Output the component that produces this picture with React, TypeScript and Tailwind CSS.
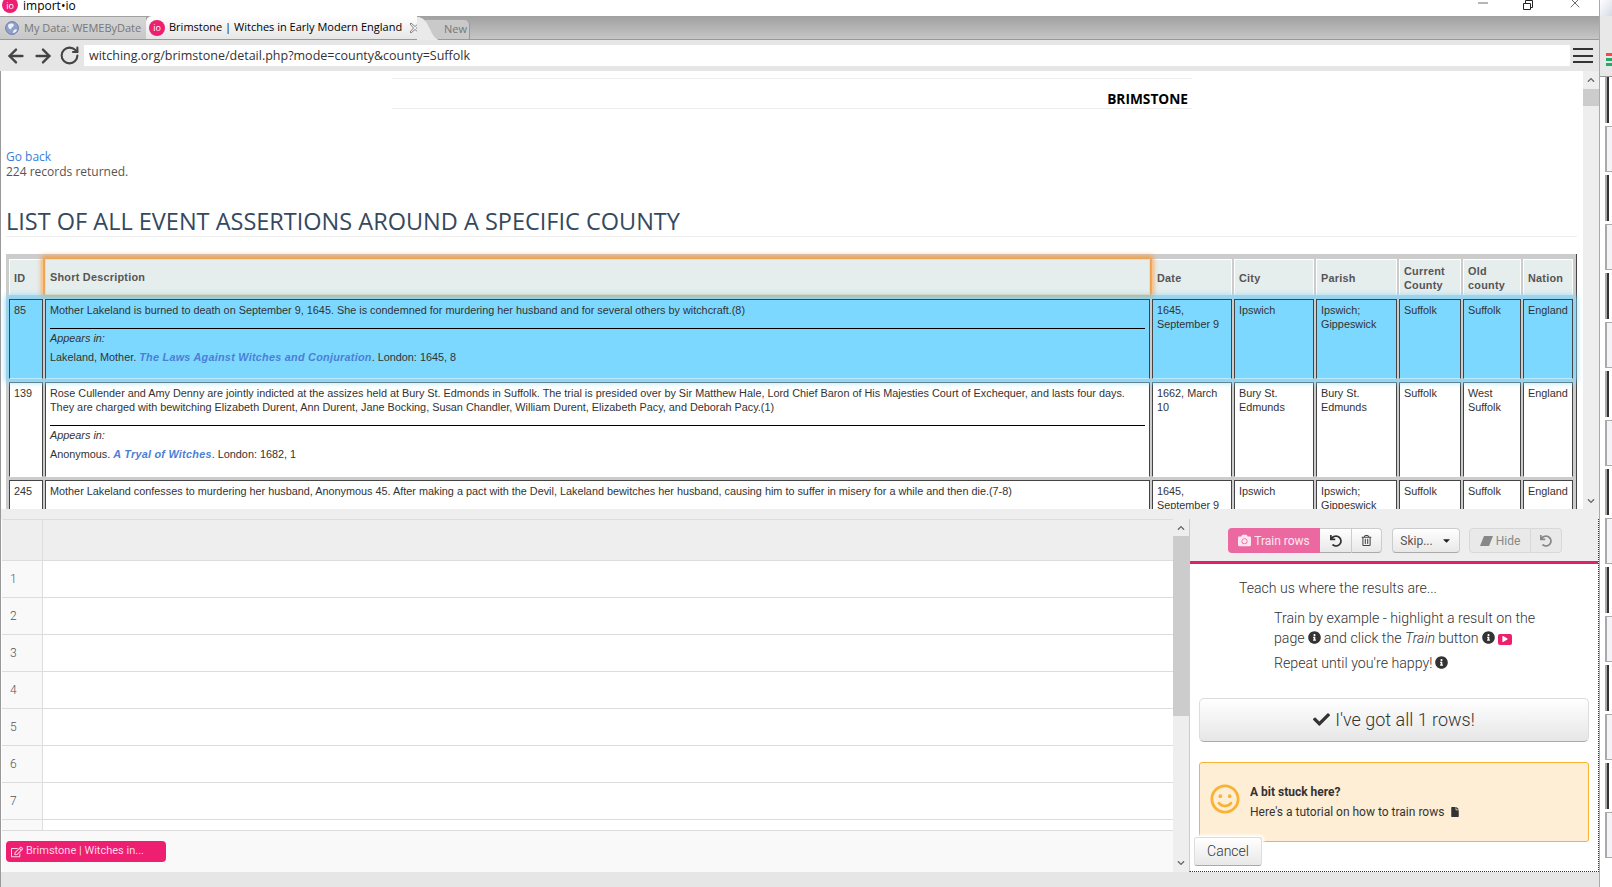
import { ArrowLeft, ArrowRight, RotateCw, X, Minus } from 'lucide-react';
import {
  FaCamera,
  FaCaretDown,
  FaCheck,
  FaChevronDown,
  FaChevronUp,
  FaFile,
  FaInfoCircle,
  FaPlay,
  FaRegEdit,
  FaRegSmile,
  FaRegTrashAlt,
  FaUndo,
} from 'react-icons/fa';

const rows = [
  {
    id: '85',
    text: 'Mother Lakeland is burned to death on September 9, 1645. She is condemned for murdering her husband and for several others by witchcraft.(8)',
    source: 'Lakeland, Mother. ',
    title: 'The Laws Against Witches and Conjuration',
    tail: '. London: 1645, 8',
    date: '1645, September 9',
    city: 'Ipswich',
    parish: 'Ipswich; Gippeswick',
    county: 'Suffolk',
    old: 'Suffolk',
  },
  {
    id: '139',
    text: 'Rose Cullender and Amy Denny are jointly indicted at the assizes held at Bury St. Edmonds in Suffolk. The trial is presided over by Sir Matthew Hale, Lord Chief Baron of His Majesties Court of Exchequer, and lasts four days. They are charged with bewitching Elizabeth Durent, Ann Durent, Jane Bocking, Susan Chandler, William Durent, Elizabeth Pacy, and Deborah Pacy.(1)',
    source: 'Anonymous. ',
    title: 'A Tryal of Witches',
    tail: '. London: 1682, 1',
    date: '1662, March 10',
    city: 'Bury St. Edmunds',
    parish: 'Bury St. Edmunds',
    county: 'Suffolk',
    old: 'West Suffolk',
  },
  {
    id: '245',
    text: 'Mother Lakeland confesses to murdering her husband, Anonymous 45. After making a pact with the Devil, Lakeland bewitches her husband, causing him to suffer in misery for a while and then die.(7-8)',
    source: '',
    title: '',
    tail: '',
    date: '1645, September 9',
    city: 'Ipswich',
    parish: 'Ipswich; Gippeswick',
    county: 'Suffolk',
    old: 'Suffolk',
  },
];

function IoLogo() {
  return (
    <span className="flex h-4 w-4 shrink-0 items-center justify-center rounded-full bg-[#ee1e71] text-[9px] leading-none text-white">
      io
    </span>
  );
}

function Info() {
  return <FaInfoCircle className="mx-[3px] inline-block align-[-1px] text-[13px] text-[#333]" />;
}

export default function App() {
  return (
    <div className="flex h-[887px] w-[1612px] overflow-hidden bg-white font-['Open_Sans',sans-serif] text-[#333]">
      <div className="flex w-[1599px] shrink-0 flex-col">
        {/* title bar */}
        <div className="flex h-4 shrink-0 items-start overflow-hidden bg-white">
          <div className="ml-[2px] -mt-[3px]">
            <IoLogo />
          </div>
          <span className="ml-[5px] text-[12px] leading-[12px] text-black">import•io</span>
          <div className="ml-auto flex items-start text-[#222]">
            <Minus className="mr-[32px] -mt-[5px] h-4 w-4" strokeWidth={1} />
            <svg className="mr-[34px] h-[10px] w-[10px]" viewBox="0 0 10 10" fill="none" stroke="#222">
              <path d="M0.5 3.5 H7.5 V9.5 H0.5 Z M2.5 3.5 V0.5 H9.5 V7.5 H7.5" />
            </svg>
            <X className="mr-[16px] -mt-[5px] h-4 w-4" strokeWidth={1} />
          </div>
        </div>

        {/* tabs */}
        <div className="flex h-6 shrink-0 items-end border-b border-[#999] bg-gradient-to-b from-[#a0a0a0] to-[#c6c6c6] pt-[1px] text-[11px]">
          <div className="flex h-[22px] w-[146px] items-center gap-[5px] bg-gradient-to-b from-[#d6d6d6] to-[#c8c8c8] pl-[5px] text-[#777]">
            <svg className="h-[14px] w-[14px] shrink-0" viewBox="0 0 14 14">
              <circle cx="7" cy="7" r="6.4" fill="#8fa0cc" stroke="#6f7fa8" />
              <path d="M3 4 C5 2 8 2 9 4 C8 6 7 6 6 8 C5 9 3 7 3 4 Z M9 9 C10 8 12 8 12 9 C11 11 10 12 8 12 C8 11 8 10 9 9 Z" fill="#eef1fa" />
            </svg>
            <span className="whitespace-nowrap">My Data: WEMEByDate</span>
          </div>
          <div className="relative z-10 flex h-[23px] w-[271px] items-center rounded-tl-[6px] bg-gradient-to-b from-white to-[#e6e6e6] pl-[3px] text-black">
            <IoLogo />
            <span className="ml-[4px] whitespace-nowrap">Brimstone | Witches in Early Modern England</span>
            <svg className="ml-[7px] h-[12px] w-[12px] shrink-0" viewBox="0 0 12 12" fill="none" stroke="#777" strokeWidth="0.9">
              <path d="M2 1 L6 4.5 L10 1 L11 2 L7.5 6 L11 10 L10 11 L6 7.5 L2 11 L1 10 L4.5 6 L1 2 Z" />
            </svg>
          </div>
          <svg className="relative z-10 -mb-[1px] h-[24px] w-[22px] shrink-0" viewBox="0 0 22 24">
            <path d="M0 1 C8 1 10 8 13 13 C15 18 18 23 22 24 L0 24 Z" fill="#eaeaea" />
          </svg>
          <div className="-ml-[14px] flex h-[19px] w-[45px] items-center justify-end rounded-tr-[5px] border-r border-[#9a9a9a] bg-[#c9c9c9] pr-[2px] text-[#777]">
            New
          </div>
        </div>

        {/* address bar */}
        <div className="flex h-[31px] shrink-0 items-center bg-[#e6e6e6] text-[#444]">
          <div className="flex w-[84px] shrink-0 items-center pl-[5px]">
            <ArrowLeft className="h-[22px] w-[22px]" strokeWidth={2.6} />
            <ArrowRight className="ml-[5px] h-[22px] w-[22px]" strokeWidth={2.6} />
            <RotateCw className="ml-[5px] h-[21px] w-[21px]" strokeWidth={2.4} />
          </div>
          <div className="flex h-[21px] w-[1486px] shrink-0 items-center bg-white pl-[5px] pt-[2px] text-[12.5px] text-[#333]">
            witching.org/brimstone/detail.php?mode=county&amp;county=Suffolk
          </div>
          <div className="ml-[3px] flex w-[20px] flex-col gap-[4.5px]">
            <span className="h-[2px] bg-[#333]" />
            <span className="h-[2px] bg-[#333]" />
            <span className="h-[2px] bg-[#333]" />
          </div>
        </div>

        {/* page */}
        <div className="flex h-[438px] shrink-0 border-l border-[#999]">
          <div className="w-[1582px] shrink-0 overflow-hidden">
            <div className="ml-[391px] mt-[7px] flex h-[31px] w-[800px] items-center justify-end border-y border-[#eee] pr-[4px] pt-[12px] text-[13.7px] font-bold text-black">
              BRIMSTONE
            </div>
            <div className="ml-[5px] mt-[40px] text-[12px] leading-[15px]">
              <div className="text-[#3b7dd8]">Go back</div>
              <div className="text-[#555]">224 records returned.</div>
            </div>
            <h1 className="ml-[5px] mt-[25px] h-[33px] w-[1571px] border-b border-[#eee] pt-[1px] text-[23.5px] leading-[32px] text-[#34495e]">
              LIST OF ALL EVENT ASSERTIONS AROUND A SPECIFIC COUNTY
            </h1>
            <div className="ml-[5px] mt-[17px] w-[1571px] border-r border-[#444] bg-[#ccc] pl-[3px] pr-[3px] pt-[5px] font-['Liberation_Sans',sans-serif] text-[10.85px] leading-[14px] text-[#333]">
              <div className="grid grid-cols-[34px_1105px_80px_80px_81px_62px_58px_50px] gap-x-[2px] text-[#555]">
                {['ID', 'Short Description', 'Date', 'City', 'Parish', 'Current County', 'Old county', 'Nation'].map((h) => (
                  <div
                    key={h}
                    className={`flex h-[36px] items-center bg-[#e6eded] px-[4px] font-bold tracking-[0.25px] ${
                      h === 'Short Description'
                        ? 'relative z-10 border border-[#fcd9a8] shadow-[0_0_5px_3px_#f59a3c]'
                        : 'border border-white border-b-0'
                    }`}
                  >
                    {h}
                  </div>
                ))}
              </div>
              {rows.map((r, i) => (
                <div
                  key={r.id}
                  className={`grid grid-cols-[34px_1105px_80px_80px_81px_62px_58px_50px] gap-x-[2px] ${
                    i === 0
                      ? 'relative z-20 mt-[4px] h-[80px] bg-[#ccc] shadow-[0_0_6px_3px_#7fd8ff]'
                      : i === 1
                        ? 'mt-[3px] h-[95px]'
                        : 'mt-[3px] h-[60px]'
                  }`}
                >
                  {[r.id, null, r.date, r.city, r.parish, r.county, r.old, 'England'].map((c, j) => (
                    <div
                      key={j}
                      className={`border border-[#444] px-[4px] pt-[3px] ${i === 0 ? 'border-b-[#b9ecff] bg-[#7dd8ff]' : 'border-b-white bg-white'}`}
                    >
                      {c ?? (
                        <>
                          <div>{r.text}</div>
                          {r.title && (
                            <>
                              <div className="mt-[11px] mb-[2px] h-[1px] bg-black" />
                              <div className="italic">Appears in:</div>
                              <div className="mt-[5px]">
                                {r.source}
                                <span className="font-bold italic tracking-[0.25px] text-[#4a7fd6]">{r.title}</span>
                                {r.tail}
                              </div>
                            </>
                          )}
                        </>
                      )}
                    </div>
                  ))}
                </div>
              ))}
            </div>
          </div>
          <div className="flex w-[16px] shrink-0 flex-col items-center bg-[#eee] text-[#666]">
            <FaChevronUp className="mt-[5px] text-[8px]" />
            <div className="mt-[5px] h-[17px] w-full bg-[#ccc]" />
            <FaChevronDown className="mt-auto mb-[4px] text-[8px]" />
          </div>
        </div>

        {/* lower panel */}
        <div className="flex min-h-0 flex-1 flex-col border-l border-[#999] bg-[#eee] font-['Roboto',sans-serif]">
          <div className="h-[10px] shrink-0" />
          <div className="flex h-[353px] shrink-0 bg-white pl-[1px]">
            <div className="flex w-[1171px] shrink-0 flex-col">
              <div className="flex h-[312px] flex-col overflow-hidden border-b border-[#ddd]">
                <div className="grid h-[42px] shrink-0 grid-cols-[41px_1fr] border-y border-[#ddd] bg-[#eee]">
                  <div className="border-r border-[#ddd]" />
                  <div />
                </div>
                {['1', '2', '3', '4', '5', '6', '7', ''].map((n) => (
                  <div key={n} className="grid h-[37px] shrink-0 grid-cols-[41px_1fr] border-b border-[#ddd]">
                    <div className="flex items-center border-r border-[#ddd] bg-[#f9f9f9] pl-[8px] text-[12px] font-light text-[#555]">{n}</div>
                    <div />
                  </div>
                ))}
              </div>
              <div className="flex h-[41px] items-start bg-[#f9f9f9] pl-[4px] pt-[10px]">
                <div className="flex h-[21px] w-[160px] items-center gap-[3px] rounded-[4px] bg-[#ee1e71] pl-[5px] text-[11px] text-[#fcd5e4]">
                  <FaRegEdit className="text-[12px]" />
                  Brimstone | Witches in...
                </div>
              </div>
            </div>

            <div className="flex w-[16px] shrink-0 flex-col items-center bg-[#eee] text-[#666]">
              <FaChevronUp className="mt-[5px] text-[8px]" />
              <div className="mt-[4px] h-[180px] w-full bg-[#ccc]" />
              <FaChevronDown className="mt-auto mb-[5px] text-[8px]" />
            </div>

            <div className="relative flex w-[410px] shrink-0 flex-col border-l border-[#ccc] border-r border-r-[#333] border-b border-b-[#333] [border-bottom-style:dotted] [border-right-style:dotted]">
              <div className="flex h-[45px] shrink-0 items-start border-b-[3px] border-[#e0206e] bg-[#eee] pl-[38px] pt-[9px] text-[12px]">
                <div className="flex h-[25px] w-[92px] items-center justify-center gap-[3px] rounded-l-[4px] bg-[#ec68a0] text-[#fde8f1]">
                  <FaCamera className="text-[13px]" />
                  Train rows
                </div>
                <div className="flex h-[25px] w-[31px] items-center justify-center border-y border-[#ccc] border-b-[#aaa] bg-gradient-to-b from-white to-[#e8e8e8] text-[#333]">
                  <FaUndo className="text-[12px]" />
                </div>
                <div className="flex h-[25px] w-[31px] items-center justify-center rounded-r-[4px] border border-[#ccc] border-b-[#aaa] bg-gradient-to-b from-white to-[#e8e8e8] text-[#444]">
                  <FaRegTrashAlt className="text-[11px]" />
                </div>
                <div className="ml-[10px] flex h-[25px] w-[68px] items-center justify-center gap-[8px] rounded-[4px] border border-[#ccc] border-b-[#aaa] bg-gradient-to-b from-white to-[#e8e8e8] text-[#555]">
                  Skip...
                  <FaCaretDown className="text-[11px] text-[#222]" />
                </div>
                <div className="ml-[9px] flex h-[25px] w-[62px] items-center justify-center gap-[3px] rounded-l-[4px] border border-[#d8d8d8] bg-[#e9e9e9] text-[#888]">
                  <svg className="h-[10px] w-[13px]" viewBox="0 0 13 10" fill="#888">
                    <path d="M4 0 H13 L9 10 H0 Z" />
                  </svg>
                  Hide
                </div>
                <div className="flex h-[25px] w-[31px] items-center justify-center rounded-r-[4px] border border-l-0 border-[#d8d8d8] bg-[#e9e9e9] text-[#888]">
                  <FaUndo className="text-[12px]" />
                </div>
              </div>

              <div className="pl-[49px] pt-[14px] text-[14.1px] font-light leading-[20px] text-[#333]">Teach us where the results are...</div>
              <div className="pl-[84px] pt-[10px] text-[14.2px] font-light leading-[20px] text-[#333]">
                <div>Train by example - highlight a result on the</div>
                <div>
                  page
                  <Info />
                  and click the <i className="pr-[3px]">Train</i>button
                  <Info />
                  <span className="inline-flex h-[11px] w-[14px] items-center justify-center rounded-[2px] bg-[#ee1e71] align-middle text-white">
                    <FaPlay className="text-[6px]" />
                  </span>
                </div>
              </div>
              <div className="pl-[84px] pt-[5px] text-[14.2px] font-light leading-[20px] text-[#333]">
                Repeat until you're happy!
                <Info />
              </div>

              <div className="mx-[9px] mt-[25px] flex h-[44px] shrink-0 items-center justify-center gap-[5px] rounded-[5px] border border-[#ddd] border-b-[#aaa] bg-gradient-to-b from-white to-[#e6e6e6] pb-[2px] text-[18px] font-light">
                <FaCheck className="text-[17px] text-[#333]" />
                I've got all 1 rows!
              </div>

              <div className="mx-[9px] mt-[20px] flex h-[80px] shrink-0 items-center rounded-[3px] border border-[#f9b233] bg-[#ffeed6] pl-[10px]">
                <FaRegSmile className="mb-[6px] text-[30px] text-[#f9b233]" />
                <div className="ml-[10px] text-[12px] leading-[20px] text-[#333]">
                  <div className="font-bold">A bit stuck here?</div>
                  <div className="flex items-center gap-[6px]">
                    Here's a tutorial on how to train rows
                    <FaFile className="text-[10px]" />
                  </div>
                </div>
              </div>

              <div className="absolute left-[4px] top-[318px] flex h-[29px] w-[68px] items-center justify-center rounded-[3px] border border-[#ddd] border-b-[#aaa] bg-gradient-to-b from-white to-[#e8e8e8] text-[14px] font-light shadow-[0_0_3px_2px_#fff]">
                Cancel
              </div>
            </div>
          </div>
          <div className="flex-1 bg-[#e6e6e6]" />
        </div>
      </div>

      {/* window behind */}
      <div className="flex w-[13px] shrink-0 flex-col overflow-hidden border-l border-[#aaa] bg-white">
        <div className="h-[16px] shrink-0 bg-gradient-to-br from-white to-[#d5dbe6]" />
        <div className="flex h-[61px] shrink-0 flex-col items-end gap-[2px] border-b border-[#999] bg-[#e8e8e8] pt-[37px]">
          <span className="h-[3px] w-[6px] bg-[#f44]" />
          <span className="h-[3px] w-[6px] bg-[#2a6]" />
          <span className="h-[3px] w-[6px] bg-[#2a6]" />
        </div>
        <div className="flex flex-1 flex-col gap-[3px] pl-[5px]">
          {[0, 1, 2, 3, 4, 5, 6, 7, 8, 9, 10, 11, 12, 13, 14, 15].map((n) => (
            <div
              key={n}
              className={`h-[46px] shrink-0 border-l-2 border-l-[#aaa] ${n % 2 ? 'border-y border-[#aaa] bg-[#f4f4f8]' : 'bg-white [box-shadow:inset_2px_0_0_#333]'}`}
            />
          ))}
        </div>
      </div>
    </div>
  );
}
